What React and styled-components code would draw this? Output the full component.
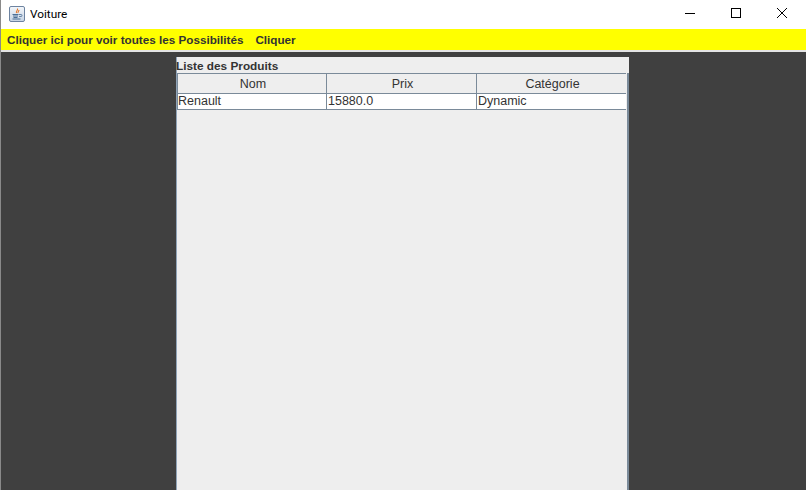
import React from "react";
import styled, { createGlobalStyle } from "styled-components";

const GlobalStyle = createGlobalStyle`
  html, body {
    margin: 0;
    padding: 0;
    background: #ffffff;
  }
`;

const Frame = styled.div`
  width: 806px;
  height: 490px;
  overflow: hidden;
  display: flex;
  flex-direction: column;
  box-sizing: border-box;
  border-left: 1px solid #8a8a8a;
  font-family: "Liberation Sans", Arial, sans-serif;
`;

// Title bar
const TitleBar = styled.div`
  height: 29px;
  flex: none;
  display: flex;
  align-items: center;
  background: #ffffff;
  padding-left: 8px;
`;
const AppIcon = styled.svg`
  width: 16px;
  height: 16px;
  flex: none;
  margin-top: -2px;
`;
const WindowTitle = styled.span`
  margin-left: 5px;
  margin-top: -1px;
  font-family: Roboto, "Noto Sans", sans-serif;
  font-size: 11.8px;
  color: #000000;
  flex: 1;
`;
const WinControls = styled.div`
  display: flex;
  margin-right: 1px;
`;
const WinButton = styled.div`
  width: 46px;
  height: 29px;
  display: flex;
  align-items: center;
  justify-content: center;
  margin-top: -3px;
`;

// Yellow menu bar
const MenuBar = styled.div`
  height: 21px;
  flex: none;
  display: flex;
  align-items: center;
  gap: 12px;
  padding-left: 6px;
  background: #ffff00;
  border-bottom: 2px solid #e4e4e4;
  box-sizing: content-box;
`;
const MenuItem = styled.span`
  font-size: 11.7px;
  font-weight: bold;
  color: #333333;
`;

// Desktop + panel
const Desktop = styled.div`
  flex: 1;
  min-height: 0;
  display: flex;
  background: #404040;
  padding: 5px 0 0 175px;
`;
const Panel = styled.div`
  width: 453px;
  box-sizing: border-box;
  display: flex;
  flex-direction: column;
  background: #eeeeee;
  border-left: 1px solid #8fa3b8;
`;
const PanelTitle = styled.div`
  height: 16px;
  flex: none;
  line-height: 18px;
  font-size: 11.8px;
  font-weight: bold;
  color: #333333;
  margin-left: -1px;
`;
const TableArea = styled.div`
  flex: 1;
  border-right: 2px solid #7a8a99;
`;
const Table = styled.div`
  display: grid;
  grid-template-columns: 149px 150px 150px;
`;
const HeaderCell = styled.div`
  height: 21px;
  box-sizing: border-box;
  border-top: 1px solid #7a8a99;
  border-bottom: 1px solid #7a8a99;
  border-left: 1px solid #7a8a99;
  background: #eeeeee;
  padding-left: 2px;
  font-size: 12.5px;
  line-height: 21px;
  text-align: center;
  color: #333333;
`;
const Cell = styled.div`
  height: 16px;
  box-sizing: border-box;
  border-bottom: 1px solid #7a8a99;
  border-left: 1px solid #7a8a99;
  background: #ffffff;
  padding-left: ${(p) => (p.$first ? 0 : 1)}px;
  font-size: 12.5px;
  line-height: 15px;
  color: #333333;
`;

const JavaIcon = () => (
  <AppIcon viewBox="0 0 16 16">
    <defs>
      <linearGradient id="bg" x1="0" y1="0" x2="0" y2="1">
        <stop offset="0" stopColor="#f4f7fb" />
        <stop offset="1" stopColor="#c5d3e4" />
      </linearGradient>
    </defs>
    <rect x="0.5" y="0.5" width="15" height="15" rx="1.5" fill="url(#bg)" stroke="#6d83a0" />
    <path d="M8.5 2.5c1 1.5-2 2.5-1 4.5M10 4c0 1.2-1.4 1.6-1 3" fill="none" stroke="#e2762a" strokeWidth="1.1" />
    <path d="M3.5 8.5h6M4 10h5M4.5 11.5h4" stroke="#4a6f96" strokeWidth="1" />
    <path d="M10 8.5h2a1 1 0 0 1 0 2h-2" fill="none" stroke="#4a6f96" strokeWidth="0.8" />
    <path d="M3.5 13h8" stroke="#4a6f96" strokeWidth="1" />
  </AppIcon>
);

const App = () => {
  const columns = ["Nom", "Prix", "Catégorie"];
  const row = ["Renault", "15880.0", "Dynamic"];
  return (
    <>
      <GlobalStyle />
      <Frame>
        <TitleBar>
          <JavaIcon />
          <WindowTitle>Voiture</WindowTitle>
          <WinControls>
            <WinButton>
              <svg width="10" height="10" viewBox="0 0 10 10">
                <path d="M0 5.5h10" stroke="#000" />
              </svg>
            </WinButton>
            <WinButton>
              <svg width="10" height="10" viewBox="0 0 10 10">
                <rect x="0.5" y="0.5" width="9" height="9" fill="none" stroke="#000" />
              </svg>
            </WinButton>
            <WinButton>
              <svg width="10" height="10" viewBox="0 0 10 10">
                <path d="M0 0l10 10M10 0L0 10" stroke="#000" strokeWidth="1" />
              </svg>
            </WinButton>
          </WinControls>
        </TitleBar>
        <MenuBar>
          <MenuItem>Cliquer ici pour voir toutes les Possibilités</MenuItem>
          <MenuItem>Cliquer</MenuItem>
        </MenuBar>
        <Desktop>
          <Panel>
            <PanelTitle>Liste des Produits</PanelTitle>
            <TableArea>
              <Table>
                {columns.map((c) => (
                  <HeaderCell key={c}>{c}</HeaderCell>
                ))}
                {row.map((c, i) => (
                  <Cell key={c} $first={i === 0}>{c}</Cell>
                ))}
              </Table>
            </TableArea>
          </Panel>
        </Desktop>
      </Frame>
    </>
  );
};

export default App;
